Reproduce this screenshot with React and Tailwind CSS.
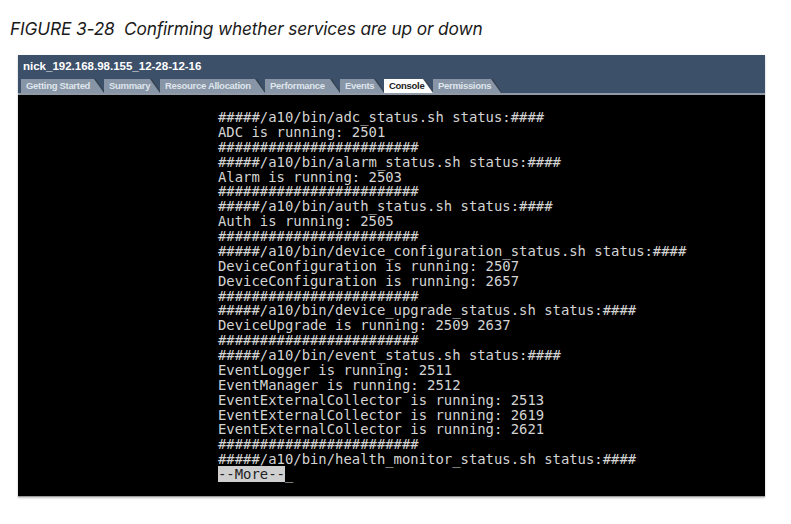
const tabs = [
  { label: "Getting Started", w: "w-[84px]" },
  { label: "Summary", w: "w-[57px]" },
  { label: "Resource Allocation", w: "w-[106px]" },
  { label: "Performance", w: "w-[76px]" },
  { label: "Events", w: "w-[45px]" },
  { label: "Console", w: "w-[50px]", active: true },
  { label: "Permissions", w: "w-[69px]" },
];

const lines = [
  "#####/a10/bin/adc_status.sh status:####",
  "ADC is running: 2501",
  "########################",
  "#####/a10/bin/alarm_status.sh status:####",
  "Alarm is running: 2503",
  "########################",
  "#####/a10/bin/auth_status.sh status:####",
  "Auth is running: 2505",
  "########################",
  "#####/a10/bin/device_configuration_status.sh status:####",
  "DeviceConfiguration is running: 2507",
  "DeviceConfiguration is running: 2657",
  "########################",
  "#####/a10/bin/device_upgrade_status.sh status:####",
  "DeviceUpgrade is running: 2509 2637",
  "########################",
  "#####/a10/bin/event_status.sh status:####",
  "EventLogger is running: 2511",
  "EventManager is running: 2512",
  "EventExternalCollector is running: 2513",
  "EventExternalCollector is running: 2619",
  "EventExternalCollector is running: 2621",
  "########################",
  "#####/a10/bin/health_monitor_status.sh status:####",
];

export default function App() {
  return (
    <div className="h-[524px] w-[791px] bg-white">
      <div className="pl-[10px] pt-[18px] font-['Inter',sans-serif] text-[17.3px] italic leading-[22px] tracking-[-0.15px] text-[#1a1a1a]">
        FIGURE 3-28&nbsp; Confirming whether services are up or down
      </div>

      <div className="ml-[18px] mt-[15px] w-[747px] border-b border-[#9a9a9a] shadow-[0_1px_2px_rgba(0,0,0,0.25)]">
        <div className="bg-[#3c5069] pt-[4px]">
          <div className="pl-[5px] font-['Liberation_Sans',sans-serif] text-[11.5px] font-bold leading-[14px] text-white">
            nick_192.168.98.155_12-28-12-16
          </div>
          <div className="mt-[6px] flex pl-[3px]">
            {tabs.map((t) => (
              <div
                key={t.label}
                className={`${t.w} relative -mr-[1px] h-[14px] [clip-path:polygon(0_0,calc(100%-9px)_0,100%_100%,0_100%)] ${
                  t.active ? "bg-[#404a55]" : "bg-[#36414d]"
                }`}
              >
                <div
                  className={`absolute inset-0 right-[1px] flex items-center pl-[5px] font-['Liberation_Sans',sans-serif] text-[9.5px] font-bold leading-none tracking-[-0.3px] [clip-path:polygon(0_0,calc(100%-10px)_0,100%_100%,0_100%)] ${
                    t.active
                      ? "bg-white text-[#222]"
                      : "bg-[#8795a6] text-[#dfe5ec]"
                  }`}
                >
                  {t.label}
                </div>
              </div>
            ))}
          </div>
          <div className="h-[2px] bg-[#8f9aa6]" />
        </div>

        <div className="h-[401px] bg-black pl-[200px] pt-[15px] font-['DejaVu_Sans_Mono',monospace] text-[13.9px] leading-[14.875px] text-[#d4d4d4]">
          {lines.map((l, i) => (
            <div key={i} className="whitespace-pre">
              {l}
            </div>
          ))}
          <div className="whitespace-pre">
            <span className="bg-[#cfcfcf] text-[#222]">--More--</span>
            <span>_</span>
          </div>
        </div>
      </div>
    </div>
  );
}
